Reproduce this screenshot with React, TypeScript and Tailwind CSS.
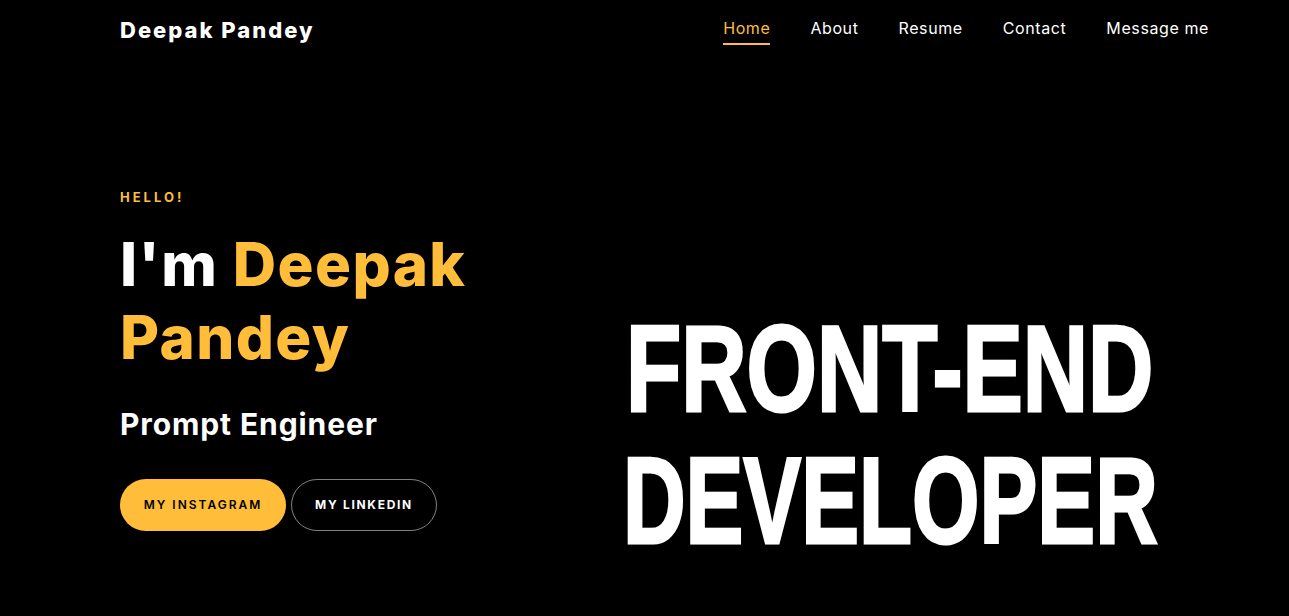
const links = ['Home', 'About', 'Resume', 'Contact', 'Message me']

function Header() {
  return (
    <header className="flex items-start justify-between pl-[120px] pr-[80px] h-[62px]">
      <a className="pt-[16px] text-[22px] leading-[28px] font-extrabold text-white tracking-[2px]">
        Deepak Pandey
      </a>
      <nav className="flex gap-[40px] pt-[16px]">
        {links.map((l, i) => (
          <a
            key={l}
            className={
              i === 0
                ? 'text-[16px] leading-[24px] tracking-[0.6px] text-[#ffbd39] border-b-2 border-[#ffbd39] pb-[3px]'
                : 'text-[16px] leading-[24px] tracking-[0.6px] text-white border-b-2 border-transparent pb-[3px]'
            }
          >
            {l}
          </a>
        ))}
      </nav>
    </header>
  )
}

function Hero() {
  return (
    <section className="flex pl-[120px] pt-[129px]">
      <div className="w-[480px] shrink-0">
        <p className="text-[13px] font-bold tracking-[3px] text-[#ffbd39] leading-none">HELLO!</p>
        <h1 className="mt-[24px] text-[60px] font-extrabold leading-[73px] tracking-[1.4px]">
          I'm <span className="text-[#ffbd39]">Deepak Pandey</span>
        </h1>
        <h2 className="mt-[35px] text-[30px] font-bold leading-none tracking-[0.9px]">Prompt Engineer</h2>
        <div className="mt-[40px] flex gap-[5px]">
          <a className="h-[52px] w-[166px] rounded-full bg-[#ffbd39] text-black text-[12px] font-semibold tracking-[2px] flex items-center justify-center">
            MY INSTAGRAM
          </a>
          <a className="h-[52px] w-[146px] rounded-full border border-white/50 text-white text-[12px] font-bold tracking-[1.7px] flex items-center justify-center">
            MY LINKEDIN
          </a>
        </div>
      </div>
      {/* big banner on the right */}
      <div
        className="ml-[20px] w-[540px] pt-[112px] flex flex-col items-center text-white font-bold text-[123px] leading-[132px] whitespace-nowrap [-webkit-text-stroke:3px_white]"
        style={{ fontFamily: '"Liberation Sans", Arial, sans-serif' }}
      >
        <span className="inline-block scale-x-[0.735]">FRONT-END</span>
        <span className="inline-block scale-x-[0.705]">DEVELOPER</span>
      </div>
    </section>
  )
}

export default function App() {
  return (
    <div
      className="min-h-[616px] bg-black text-white overflow-hidden"
      style={{ fontFamily: 'Inter, "Open Sans", sans-serif' }}
    >
      <Header />
      <Hero />
    </div>
  )
}
